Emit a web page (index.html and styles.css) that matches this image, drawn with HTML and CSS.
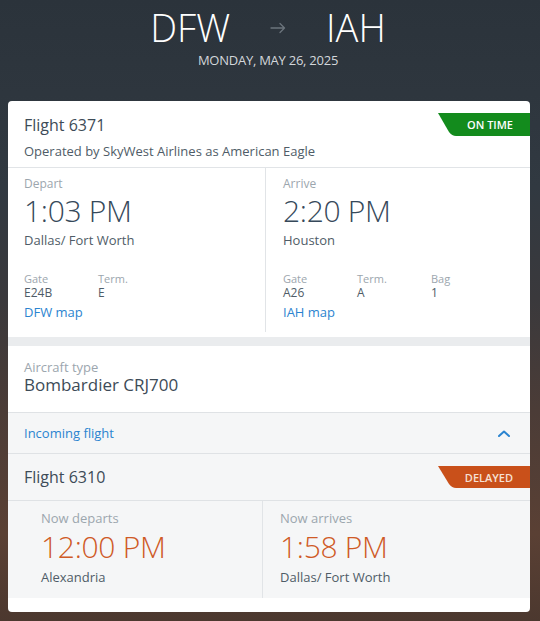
FILE: index.html
```html
<!DOCTYPE html>
<html lang="en">
<head>
<meta charset="utf-8">
<title>DFW to IAH</title>
<link rel="stylesheet" href="styles.css">
</head>
<body>
<header class="route">
  <div class="cities">
    <span class="city">DFW</span>
    <svg class="arrow" width="16" height="12" viewBox="0 0 16 12" aria-hidden="true">
      <path d="M1 6 H14.5 M10 1.5 L14.5 6 L10 10.5" fill="none" stroke="#6b747c" stroke-width="1.3" stroke-linecap="round" stroke-linejoin="round"/>
    </svg>
    <span class="city">IAH</span>
  </div>
  <div class="date">MONDAY, MAY 26, 2025</div>
</header>

<main class="card">
  <section class="flight-head">
    <div class="flight-no">Flight 6371</div>
    <div class="operator">Operated by SkyWest Airlines as American Eagle</div>
    <div class="badge badge-ontime">ON TIME</div>
  </section>

  <section class="times">
    <div class="col col-left">
      <div class="label">Depart</div>
      <div class="time">1:03 PM</div>
      <div class="city-name">Dallas/ Fort Worth</div>
      <div class="facts">
        <div class="fact"><div class="fact-label">Gate</div><div class="fact-value">E24B</div></div>
        <div class="fact"><div class="fact-label">Term.</div><div class="fact-value">E</div></div>
      </div>
      <a class="link" href="#">DFW map</a>
    </div>
    <div class="col col-right">
      <div class="label">Arrive</div>
      <div class="time">2:20 PM</div>
      <div class="city-name">Houston</div>
      <div class="facts">
        <div class="fact"><div class="fact-label">Gate</div><div class="fact-value">A26</div></div>
        <div class="fact"><div class="fact-label">Term.</div><div class="fact-value">A</div></div>
        <div class="fact"><div class="fact-label">Bag</div><div class="fact-value">1</div></div>
      </div>
      <a class="link" href="#">IAH map</a>
    </div>
  </section>

  <div class="band"></div>

  <section class="aircraft">
    <div class="label-lg">Aircraft type</div>
    <div class="aircraft-name">Bombardier CRJ700</div>
  </section>

  <section class="incoming">
    <span class="incoming-text">Incoming flight</span>
    <svg class="chevron" width="12" height="7" viewBox="0 0 12 7" aria-hidden="true">
      <path d="M1 6 L6 1.5 L11 6" fill="none" stroke="#2b84d0" stroke-width="2" stroke-linecap="round" stroke-linejoin="round"/>
    </svg>
  </section>

  <section class="flight-head2">
    <div class="flight-no">Flight 6310</div>
    <div class="badge badge-delayed">DELAYED</div>
  </section>

  <section class="times2">
    <div class="col2 col2-left">
      <div class="label-lg">Now departs</div>
      <div class="time time-late">12:00 PM</div>
      <div class="city-name">Alexandria</div>
    </div>
    <div class="col2 col2-right">
      <div class="label-lg">Now arrives</div>
      <div class="time time-late">1:58 PM</div>
      <div class="city-name">Dallas/ Fort Worth</div>
    </div>
  </section>
</main>
</body>
</html>
```

FILE: styles.css
```css
html {
  min-height: 100%;
  background: linear-gradient(180deg, #2b333b 0%, #313941 30%, #3a393c 48%, #4b3c37 66%, #5a4034 86%, #4c382f 100%);
}

body {
  margin: 0;
  min-height: 621px;
  font-family: "Open Sans", "Noto Sans", sans-serif;
  color: #3d4b57;
}

.route {
  padding-top: 5px;
  padding-bottom: 33px;
  text-align: center;
}

.cities {
  display: flex;
  justify-content: center;
  align-items: center;
  gap: 40px;
  height: 44px;
  padding-right: 4px;
}

.city {
  font-size: 38px;
  font-weight: 300;
  line-height: 44px;
  color: #ffffff;
}

.arrow {
  display: block;
  margin-top: 2px;
}

.date {
  margin-top: 3px;
  font-size: 13px;
  line-height: 16px;
  color: #d3d7db;
  letter-spacing: -0.25px;
  padding-right: 4px;
}

.card {
  position: relative;
  width: 522px;
  margin-left: 8px;
  background: #ffffff;
  border-radius: 4px;
  overflow: hidden;
  padding-bottom: 14px;
}

.flight-head {
  position: relative;
  padding: 13px 16px 7px;
  border-bottom: 1px solid #e1e4e7;
}

.flight-no {
  font-size: 16px;
  line-height: 22px;
  color: #3d4b57;
}

.operator {
  margin-top: 6px;
  font-size: 13px;
  line-height: 18px;
  color: #4f5c67;
}

.badge {
  position: absolute;
  right: 0;
  width: 92px;
  height: 23px;
  box-sizing: border-box;
  padding-right: 17px;
  display: flex;
  align-items: center;
  justify-content: flex-end;
  font-size: 11px;
  font-weight: 600;
  color: #ffffff;
  clip-path: path("M0 0 H92 V23 H18 Q14 23 11 19 Z");
}

.badge-ontime {
  top: 12px;
  background: #138b1d;
}

.badge-delayed {
  top: 12px;
  height: 22px;
  background: #c9501a;
  color: #f6e0d4;
  clip-path: path("M0 0 H92 V22 H18 Q14 22 11 18 Z");
}

.times {
  display: grid;
  grid-template-columns: 258px 1fr;
  padding-bottom: 5px;
}

.col {
  padding-top: 8px;
  padding-bottom: 11px;
}

.col-left {
  padding-left: 16px;
  border-right: 1px solid #e1e4e7;
}

.col-right {
  padding-left: 17px;
}

.label {
  font-size: 12px;
  line-height: 16px;
  color: #9ca6ae;
}

.label-lg {
  font-size: 13px;
  line-height: 16px;
  color: #9ca6ae;
}

.time {
  margin-top: 1px;
  font-size: 30px;
  font-weight: 300;
  line-height: 36px;
  color: #36495a;
  letter-spacing: -0.3px;
}

.time-late {
  margin-top: 3px;
  color: #cf5a26;
}

.city-name {
  margin-top: 2px;
  font-size: 13px;
  line-height: 18px;
  color: #4f5c67;
}

.time-late + .city-name {
  margin-top: 3px;
}

.facts {
  display: flex;
  margin-top: 23px;
}

.fact {
  width: 74px;
}

.fact-label {
  font-size: 11px;
  line-height: 14px;
  color: #9ca6ae;
}

.fact-value {
  font-size: 12px;
  line-height: 14px;
  color: #4f5c67;
}

.link {
  display: block;
  margin-top: 3px;
  font-size: 13px;
  line-height: 18px;
  color: #2b84d0;
  text-decoration: none;
}

.band {
  height: 9px;
  background: #eaecee;
}

.aircraft {
  padding: 13px 16px 17px;
  border-bottom: 1px solid #dfe2e5;
}

.aircraft-name {
  font-size: 17px;
  line-height: 20px;
  color: #3d4b57;
}

.incoming {
  display: flex;
  align-items: center;
  justify-content: space-between;
  height: 40px;
  padding: 0 20px 0 16px;
  background: #f5f6f7;
  border-bottom: 1px solid #dfe2e5;
}

.incoming-text {
  font-size: 13px;
  color: #2b84d0;
}

.chevron {
  display: block;
}

.flight-head2 {
  position: relative;
  padding: 12px 16px 12px;
  background: #f5f6f7;
  border-bottom: 1px solid #dfe2e5;
}

.times2 {
  display: grid;
  grid-template-columns: 255px 1fr;
  background: #f5f6f7;
}

.col2 {
  padding-top: 9px;
  padding-bottom: 12px;
}

.col2-left {
  padding-left: 33px;
  border-right: 1px solid #e1e4e7;
}

.col2-right {
  padding-left: 17px;
}
```
